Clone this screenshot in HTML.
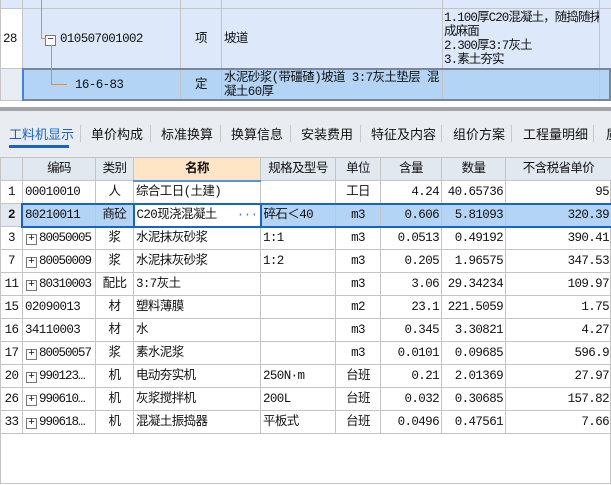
<!DOCTYPE html>
<html><head><meta charset="utf-8"><style>
*{margin:0;padding:0;box-sizing:border-box}
body{width:611px;height:485px;overflow:hidden;background:#fff;font-family:"Liberation Mono","WenQuanYi Zen Hei","Noto Sans CJK SC",monospace;font-size:12.5px;letter-spacing:-0.6px;color:#111;position:relative}
.abs{position:absolute}
table{border-collapse:collapse;table-layout:fixed;position:absolute;left:0}
td{border:1px solid #c4c4c4;padding:0 2px;white-space:nowrap;overflow:hidden;height:23px;line-height:16px;vertical-align:middle}
.c{text-align:center}.r{text-align:right}
.k{letter-spacing:-1px}
.pl{display:inline-block;width:11px;height:11px;border:1px solid #777;font-size:11px;line-height:9px;text-align:center;vertical-align:0px;margin:0 2px 0 1px;background:#fff;letter-spacing:0}
.tabs span{position:absolute;top:124px;font-size:13px;letter-spacing:0;font-family:"WenQuanYi Zen Hei","Noto Sans CJK SC",sans-serif}
.sep{position:absolute;top:125px;width:1px;height:17px;background:#c8c8c8}
</style></head><body>
<table style="top:-1px;width:611px">
<colgroup><col style="width:22px"><col style="width:158px"><col style="width:41px"><col style="width:221px"><col style="width:157px"><col style="width:12px"></colgroup>
<tr><td style="height:9px;background:#dde9fb"></td><td style="height:9px;background:#dde9fb"></td><td style="height:9px;background:#dde9fb"></td><td style="height:9px;background:#dde9fb"></td><td style="height:9px;background:#dde9fb"></td><td style="height:9px;background:#dde9fb"></td></tr>
<tr><td style="height:60px;background:#fff">28</td><td style="height:60px;background:#dde9fb"><span style="margin-left:20px"><span class="pl" style="margin:0 4px 0 0">−</span>010507001002</span></td><td class="c" style="background:#dde9fb">项</td><td style="background:#dde9fb">坡道</td><td style="background:#dde9fb;white-space:nowrap;line-height:14px;letter-spacing:-0.9px;padding:0 1px">1.100厚C20混凝土，随捣随抹<br>成麻面<br>2.300厚3:7灰土<br>3.素土夯实</td><td style="background:#dde9fb"></td></tr>
<tr><td style="height:32px;background:#e8ecf3"></td><td style="background:#b3d4f5"><span style="margin-left:50px">16-6-83</span></td><td class="c" style="background:#b3d4f5">定</td><td style="background:#b3d4f5;white-space:normal;line-height:14px">水泥砂浆(带礓碴)坡道 3:7灰土垫层 混凝土60厚</td><td style="background:#b3d4f5"></td><td style="background:#b3d4f5"></td></tr>
</table>
<div class="abs" style="left:22px;top:68px;width:589px;height:33px;border:2px solid #7a8698;border-left:2px solid #3a86e0"></div>
<div class="abs" style="left:41px;top:0;width:1px;height:38px;background:#f08a2a"></div>
<div class="abs" style="left:41px;top:38px;width:5px;height:1px;background:#f08a2a"></div>
<div class="abs" style="left:51px;top:45px;width:1px;height:39px;background:#f08a2a"></div>
<div class="abs" style="left:51px;top:84px;width:16px;height:1px;background:#f08a2a"></div>
<div class="abs" style="left:0;top:101px;width:611px;height:6px;background:#fff"></div>
<div class="abs" style="left:0;top:107px;width:611px;height:4px;background:#a3a5a9"></div>
<div class="abs" style="left:0;top:111px;width:611px;height:47px;background:#e9ecf0"></div>
<div class="tabs">
<span style="left:9px;color:#1764c9">工料机显示</span>
<span style="left:91px">单价构成</span>
<span style="left:161px">标准换算</span>
<span style="left:231px">换算信息</span>
<span style="left:301px">安装费用</span>
<span style="left:371px">特征及内容</span>
<span style="left:453px">组价方案</span>
<span style="left:523px">工程量明细</span>
<span style="left:606px">质</span>
</div>
<div class="sep" style="left:80px"></div><div class="sep" style="left:150px"></div><div class="sep" style="left:220px"></div><div class="sep" style="left:290px"></div><div class="sep" style="left:360px"></div><div class="sep" style="left:441px"></div><div class="sep" style="left:511px"></div><div class="sep" style="left:593px"></div>
<div class="abs" style="left:9px;top:145px;width:60px;height:3px;background:#1764c9"></div>
<div class="abs" style="left:0;top:158px;width:611px;height:326px;border:1px solid #c4c4c4;border-top:none"></div>
<table style="top:157px;width:611px">
<colgroup><col style="width:22px"><col style="width:73px"><col style="width:38px"><col style="width:127px"><col style="width:75px"><col style="width:45px"><col style="width:61px"><col style="width:64px"><col style="width:106px"></colgroup>
<tr style="background:#e2e8f0"><td></td><td class="c">编码</td><td class="c">类别</td><td class="c" style="background:#fde5c6;font-weight:bold;border-bottom:2px solid #4f93e3">名称</td><td class="c">规格及型号</td><td class="c">单位</td><td class="c">含量</td><td class="c">数量</td><td class="c">不含税省单价</td></tr>
<tr><td class="c">1</td><td>00010010</td><td class="c">人</td><td>综合工日(土建)</td><td></td><td class="c">工日</td><td class="r">4.24</td><td class="r">40.65736</td><td class="r">95</td></tr>
<tr style="background:#b3d4f5"><td class="c" style="background:#e2e8f0;font-weight:bold">2</td><td>80210011</td><td class="c">商砼</td><td style="background:#fff;border:2px solid #1764c9">C20现浇混凝土<span style="float:right;color:#4a7fc4">···</span></td><td>碎石＜40</td><td class="c">m3</td><td class="r">0.606</td><td class="r">5.81093</td><td class="r">320.39</td></tr>
<tr><td class="c">3</td><td class="k"><span class="pl">+</span>80050005</td><td class="c">浆</td><td>水泥抹灰砂浆</td><td>1:1</td><td class="c">m3</td><td class="r">0.0513</td><td class="r">0.49192</td><td class="r">390.41</td></tr>
<tr><td class="c">7</td><td class="k"><span class="pl">+</span>80050009</td><td class="c">浆</td><td>水泥抹灰砂浆</td><td>1:2</td><td class="c">m3</td><td class="r">0.205</td><td class="r">1.96575</td><td class="r">347.53</td></tr>
<tr><td class="c">11</td><td class="k"><span class="pl">+</span>80310003</td><td class="c">配比</td><td>3:7灰土</td><td></td><td class="c">m3</td><td class="r">3.06</td><td class="r">29.34234</td><td class="r">109.97</td></tr>
<tr><td class="c">15</td><td>02090013</td><td class="c">材</td><td>塑料薄膜</td><td></td><td class="c">m2</td><td class="r">23.1</td><td class="r">221.5059</td><td class="r">1.75</td></tr>
<tr><td class="c">16</td><td>34110003</td><td class="c">材</td><td>水</td><td></td><td class="c">m3</td><td class="r">0.345</td><td class="r">3.30821</td><td class="r">4.27</td></tr>
<tr><td class="c">17</td><td class="k"><span class="pl">+</span>80050057</td><td class="c">浆</td><td>素水泥浆</td><td></td><td class="c">m3</td><td class="r">0.0101</td><td class="r">0.09685</td><td class="r">596.9</td></tr>
<tr><td class="c">20</td><td class="k"><span class="pl">+</span>990123…</td><td class="c">机</td><td>电动夯实机</td><td>250N·m</td><td class="c">台班</td><td class="r">0.21</td><td class="r">2.01369</td><td class="r">27.97</td></tr>
<tr><td class="c">26</td><td class="k"><span class="pl">+</span>990610…</td><td class="c">机</td><td>灰浆搅拌机</td><td>200L</td><td class="c">台班</td><td class="r">0.032</td><td class="r">0.30685</td><td class="r">157.82</td></tr>
<tr><td class="c">33</td><td class="k"><span class="pl">+</span>990618…</td><td class="c">机</td><td>混凝土振捣器</td><td>平板式</td><td class="c">台班</td><td class="r">0.0496</td><td class="r">0.47561</td><td class="r">7.66</td></tr>
</table>
<div class="abs" style="left:21px;top:203px;width:590px;height:25px;border:2px solid #1764c9;border-right:none"></div>
</body></html>
